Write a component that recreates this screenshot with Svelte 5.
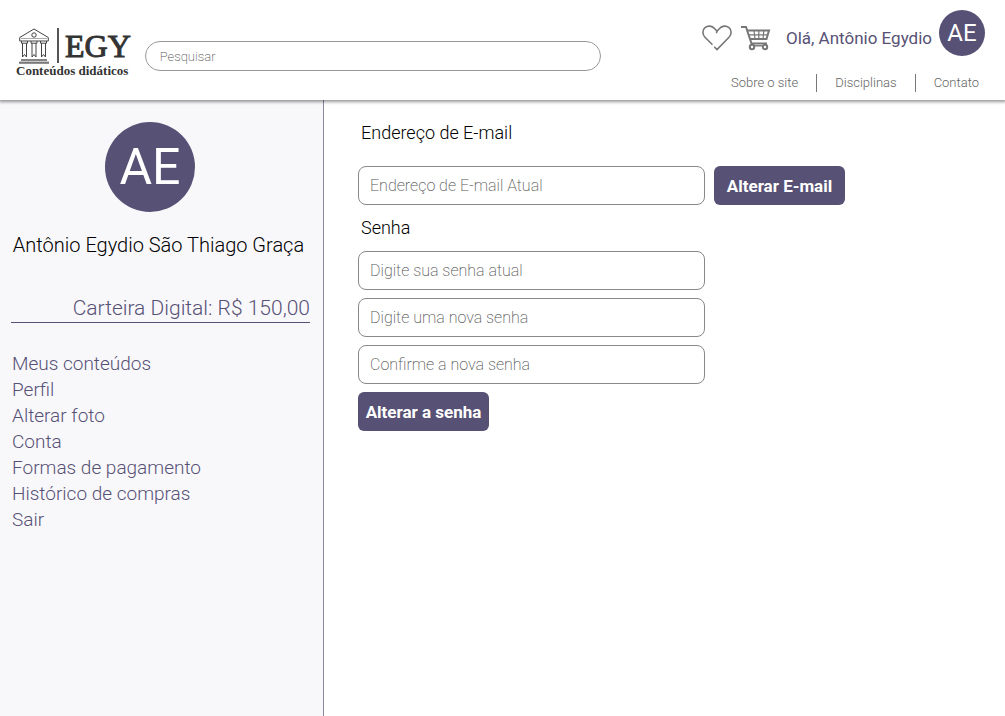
<script>
  const links = ['Sobre o site', 'Disciplinas', 'Contato'];
  const menu = [
    'Meus conteúdos',
    'Perfil',
    'Alterar foto',
    'Conta',
    'Formas de pagamento',
    'Histórico de compras',
    'Sair'
  ];
  const passwords = [
    { id: 'current', label: 'Digite sua senha atual' },
    { id: 'new', label: 'Digite uma nova senha' },
    { id: 'confirm', label: 'Confirme a nova senha' }
  ];
</script>

<div class="page">
  <header>
    <a class="logo" href="#inicio">
      <span class="brand">
        <svg width="30" height="36" viewBox="0 0 30 36" fill="none" stroke="#444" stroke-width="1" aria-hidden="true">
          <path d="M.7 9.500 15 1l14.300 8.500v3.500H.7z" />
          <path d="M2 10.500h26" stroke="#aaa" />
          <circle cx="15" cy="7" r="2.200" />
          <path d="M2.500 13v2.200h6V13M12 13v2.200h6V13M21.500 13v2.200h6V13" />
          <path d="M3.500 15v14l2-2.500 2 2.500V15M13 15v14l2-2.500 2 2.500V15M22.500 15v14l2-2.500 2 2.500V15" />
          <path d="M2 32h26" stroke-width="1.800" stroke="#777" />
          <path d="M0 34.700h30" stroke-width="2.200" stroke="#777" />
        </svg>
        <span class="rule"></span>
        <span class="name">EGY</span>
      </span>
      <span class="tagline">Conteúdos didáticos</span>
    </a>

    <input class="search" type="search" placeholder="Pesquisar" aria-label="Pesquisar" />

    <div class="side">
      <div class="account">
        <button class="icon" aria-label="Favoritos">
          <svg width="30" height="26" viewBox="0 0 30 26" fill="none" stroke="#777" stroke-width="1.600" stroke-linecap="round" aria-hidden="true">
            <path d="M10 19.300 3 12.300C.2 9.300.2 5 3 2.700c3-2.500 7-2 9.500.8L15 6.300l-.4 1.300M15 6.300l2.500-2.800C20 .7 24 .2 27 2.700c2.800 2.300 2.800 6.600 0 9.600L15 24.500l-2.300-2.300" />
          </svg>
        </button>
        <button class="icon" aria-label="Carrinho">
          <svg width="30" height="26" viewBox="0 0 30 26" fill="none" stroke="#777" stroke-width="2" aria-hidden="true">
            <path d="M0 2h5l5.500 16.500H26" />
            <path d="M6 5.500h22L25.500 14H9" />
            <path d="M7.800 9.800h19M13 5.500l1 8.500M17.800 5.500V14M22.800 5.500 22 14" stroke-width="1.200" />
            <circle cx="11" cy="22" r="2.200" />
            <circle cx="24" cy="22" r="2.200" />
            <path d="M13 20.800h9" stroke-width="1.400" />
          </svg>
        </button>
        <span class="hello">Olá, Antônio Egydio</span>
        <span class="avatar">AE</span>
      </div>
      <nav class="links" aria-label="Site">
        {#each links as link}
          <a href="#site">{link}</a>
        {/each}
      </nav>
    </div>
  </header>

  <div class="body">
    <aside>
      <div class="avatar large">AE</div>
      <div class="fullname">Antônio Egydio São Thiago Graça</div>
      <div class="wallet">Carteira Digital: R$ 150,00</div>
      <nav class="menu" aria-label="Conta">
        {#each menu as item}
          <a href="#conta">{item}</a>
        {/each}
      </nav>
    </aside>

    <main>
      <form class="email">
        <h2><label for="email">Endereço de E-mail</label></h2>
        <div class="row">
          <input class="field" id="email" type="email" placeholder="Endereço de E-mail Atual" />
          <button class="action" type="button">Alterar E-mail</button>
        </div>
      </form>
      <form class="password">
        <h2>Senha</h2>
        {#each passwords as p}
          <input class="field" id={p.id} type="password" placeholder={p.label} aria-label={p.label} />
        {/each}
        <button class="action" type="button">Alterar a senha</button>
      </form>
    </main>
  </div>
</div>

<style>
  :global(body) {
    margin: 0;
    background: #fff;
  }

  .page {
    display: flex;
    flex-direction: column;
    min-height: 100vh;
    font-family: Roboto, 'Liberation Sans', sans-serif;
    font-weight: 300;
    color: #000;
  }

  .page * {
    box-sizing: border-box;
  }

  a {
    color: inherit;
    text-decoration: none;
  }

  button,
  input {
    font: inherit;
  }

  header {
    display: flex;
    align-items: flex-start;
    gap: 14px;
    min-height: 100px;
    padding: 10px 20px 0 16px;
    background: #fff;
    box-shadow: 0 1px 3px 1px rgba(0, 0, 0, 0.4);
    position: relative;
  }

  .logo {
    display: flex;
    flex-direction: column;
    flex: none;
    padding-top: 17px;
    color: #333;
    font-family: 'Liberation Serif', serif;
    font-weight: 700;
  }

  .brand {
    display: flex;
    align-items: center;
    gap: 8px;
    height: 37px;
    padding-left: 3px;
  }

  .rule {
    width: 2px;
    height: 35px;
    margin-right: -2px;
    background: #555;
  }

  .name {
    font-size: 32px;
    font-weight: 400;
    line-height: 36px;
    -webkit-text-stroke: 1px #333;
  }

  .tagline {
    font-size: 13px;
    line-height: 14px;
  }

  .search {
    flex: 1;
    min-width: 0;
    max-width: 456px;
    height: 30px;
    margin-top: 31px;
    padding: 0 14px;
    border: 1px solid #999;
    border-radius: 15px;
    outline: none;
    background: #fff;
    font-size: 13px;
  }

  input::placeholder {
    color: #555;
    font-weight: 200;
    opacity: 1;
  }

  .side {
    display: flex;
    flex-direction: column;
    align-items: flex-end;
    flex: none;
    margin-left: auto;
  }

  .account {
    display: flex;
    align-items: center;
    gap: 9px;
  }

  .icon {
    display: block;
    height: 26px;
    margin-top: 9px;
    padding: 0;
    border: 0;
    background: none;
  }

  .hello {
    margin: 9px -2px 0 6px;
    color: #575175;
    font-size: 17px;
    font-weight: 400;
  }

  .avatar {
    display: grid;
    place-items: center;
    width: 46px;
    height: 46px;
    border-radius: 50%;
    background: #575175;
    color: #fff;
    font-size: 24px;
    font-weight: 400;
  }

  .links {
    display: flex;
    margin: 18px 6px 0 0;
    color: #666;
    font-size: 13px;
    line-height: 18px;
  }

  .links a + a {
    margin-left: 18px;
    padding-left: 19px;
    background: linear-gradient(#777, #777) left / 1px 100% no-repeat;
  }

  .body {
    display: flex;
    flex: 1;
  }

  aside {
    flex: none;
    width: 324px;
    padding: 22px 13px 0 11px;
    border-right: 1px solid #8c889f;
    background: #f8f8fb;
  }

  .large {
    width: 90px;
    height: 90px;
    margin-left: 94px;
    font-size: 50px;
  }

  .fullname {
    margin: 20px 4px 0 0;
    font-size: 20px;
    line-height: 26px;
    text-align: center;
  }

  .wallet {
    margin-top: 36px;
    border-bottom: 1px solid #575175;
    color: #575175;
    font-size: 21px;
    line-height: 28px;
    text-align: right;
  }

  .menu {
    display: flex;
    flex-direction: column;
    align-items: flex-start;
    margin-top: 28px;
    padding-left: 1px;
    color: #575175;
    font-size: 19px;
    line-height: 26px;
  }

  main {
    flex: 1;
    min-width: 0;
    padding: 20px 34px;
  }

  h2 {
    margin: 0;
    padding-left: 3px;
    font-size: 18px;
    font-weight: 300;
    line-height: 26px;
  }

  .email h2 {
    margin-bottom: 20px;
  }

  .row {
    display: flex;
    gap: 9px;
  }

  .field {
    flex: 0 1 auto;
    width: 100%;
    max-width: 347px;
    height: 39px;
    padding: 0 11px;
    border: 1px solid #888;
    border-radius: 8px;
    outline: none;
    background: #fff;
    font-size: 16px;
  }

  .action {
    flex: none;
    width: 131px;
    height: 39px;
    padding: 0;
    border: 0;
    border-radius: 6px;
    background: #575175;
    color: #fff;
    font-size: 17px;
    font-weight: 700;
    white-space: nowrap;
  }

  .password {
    display: flex;
    flex-direction: column;
    align-items: flex-start;
    gap: 8px;
    margin-top: 10px;
  }

  .password h2 {
    margin-bottom: 2px;
  }

  .password .field {
    flex: none;
  }
</style>
